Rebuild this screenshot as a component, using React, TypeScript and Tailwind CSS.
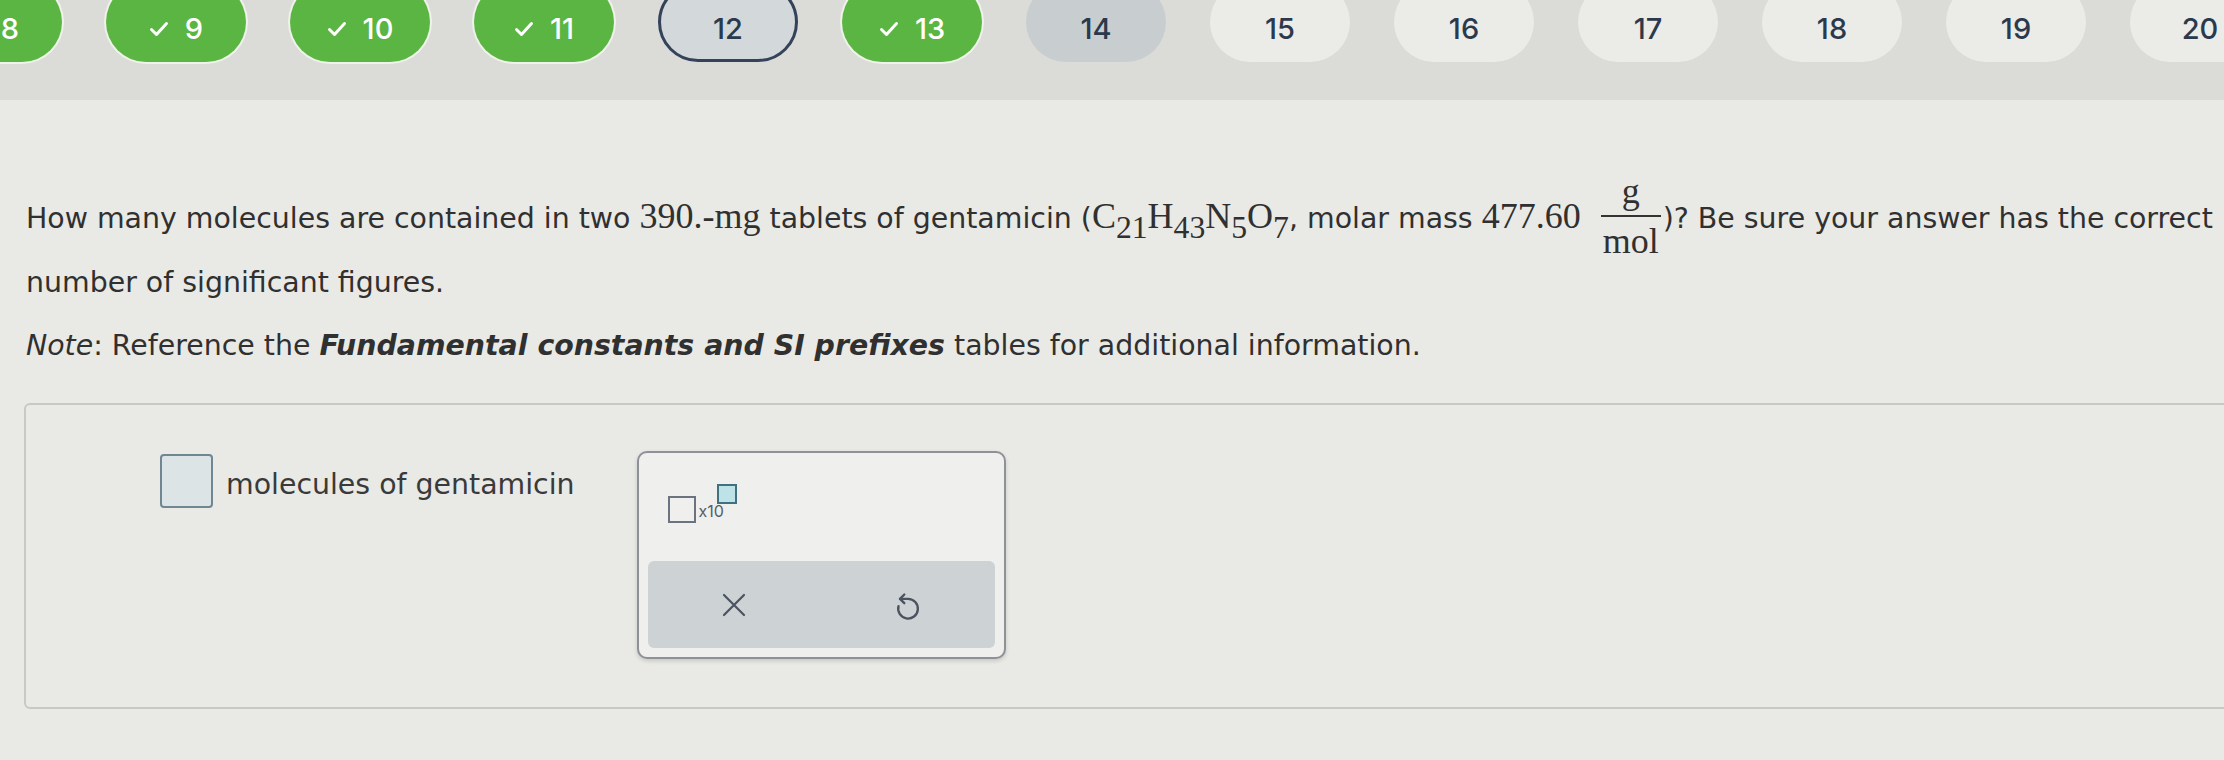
import React from "react";

type Status = "done" | "current" | "visited" | "todo";

const questions: { n: number; status: Status }[] = [
  { n: 8, status: "done" },
  { n: 9, status: "done" },
  { n: 10, status: "done" },
  { n: 11, status: "done" },
  { n: 12, status: "current" },
  { n: 13, status: "done" },
  { n: 14, status: "visited" },
  { n: 15, status: "todo" },
  { n: 16, status: "todo" },
  { n: 17, status: "todo" },
  { n: 18, status: "todo" },
  { n: 19, status: "todo" },
  { n: 20, status: "todo" },
];

const pillStyle: Record<Status, string> = {
  done: "bg-[#5bb542] text-white ring-2 ring-[#eef2ea]",
  current: "bg-[#d3d8da] text-[#2b394c] border-[3px] border-[#34435a]",
  visited: "bg-[#c8ced0] text-[#2b394c]",
  todo: "bg-[#ebebe8] text-[#2b394c]",
};

const serif = "font-['Liberation_Serif',serif] text-[36px]";
const sub = "relative -bottom-[0.32em] text-[88%] leading-none";

function CheckMark() {
  return (
    <svg width="20" height="16" viewBox="0 0 20 16" fill="none" stroke="currentColor" strokeWidth="3" strokeLinecap="round" strokeLinejoin="round">
      <path d="M2.5 8.5 7.5 13.5 17.5 2.5" />
    </svg>
  );
}

function QuestionBar() {
  return (
    <div className="h-[100px] overflow-hidden bg-[#dbdbd8]">
      <div className="-mt-[18px] -ml-[78px] flex gap-[44px]">
        {questions.map((q) => (
          <div
            key={q.n}
            className={`flex h-[80px] w-[140px] shrink-0 items-center justify-center gap-[16px] rounded-full pt-[14px] font-['Inter',sans-serif] text-[29px] font-medium ${pillStyle[q.status]}`}
          >
            {q.status === "done" && <CheckMark />}
            <span>{q.n}</span>
          </div>
        ))}
      </div>
    </div>
  );
}

function Fraction() {
  return (
    <span className="relative -top-[4px] -my-[12px] mr-[2px] ml-[20px] inline-flex flex-col items-center align-middle font-['Liberation_Serif',serif] text-[36px] leading-[36px]">
      <span>g</span>
      <span className="my-[6px] h-[2px] w-[60px] bg-[#333]" />
      <span>mol</span>
    </span>
  );
}

function XIcon() {
  return (
    <svg width="24" height="24" viewBox="0 0 24 24" fill="none" stroke="#4b5360" strokeWidth="2.2" strokeLinecap="round">
      <path d="M2 2 22 22M22 2 2 22" />
    </svg>
  );
}

function UndoIcon() {
  return (
    <svg width="26" height="32" viewBox="0 0 20 26" fill="none" stroke="#4b5360" strokeWidth="1.9" strokeLinecap="round" strokeLinejoin="round">
      <path d="M7 4.5 3.5 8 7 11.5" />
      <path d="M3.5 8H10A8 8 0 1 1 2.3 13.9" />
    </svg>
  );
}

export default function App() {
  return (
    <div className="min-h-[760px] w-full overflow-hidden bg-[#e9e9e6] font-['DejaVu_Sans',Verdana,sans-serif] text-[#303030]">
      <QuestionBar />

      <div className="px-[26px] pt-[85px] text-[28.4px] leading-[63px]">
        <p className="whitespace-nowrap">
          How many molecules are contained in two <span className={serif}>390.-mg</span> tablets of gentamicin (
          <span className={serif}>
            C<sub className={sub}>21</sub>H<sub className={sub}>43</sub>N<sub className={sub}>5</sub>O<sub className={sub}>7</sub>
          </span>
          , molar mass <span className={serif}>477.60</span>
          <Fraction />
          )? Be sure your answer has the correct
          <br />
          number of significant figures.
        </p>
        <p>
          <i>Note</i>: Reference the{" "}
          <b>
            <i>Fundamental constants and SI prefixes</i>
          </b>{" "}
          tables for additional information.
        </p>
      </div>

      <div className="-mr-[200px] mt-[26px] ml-[24px] flex h-[306px] items-start rounded-[6px] border-2 border-[#c8c8c5] pl-[134px] pt-[49px]">
        <div className="h-[54px] w-[53px] rounded-[4px] border-2 border-[#6e8793] bg-[#dde4e6]" />
        <span className="mt-[11px] ml-[13px] text-[28.4px] leading-[40px] text-[#3a3a3a]">molecules of gentamicin</span>

        <div className="-mt-[3px] ml-[62px] flex h-[208px] w-[369px] flex-col rounded-[10px] border-2 border-[#8e9296] bg-[#efefed] px-[9px] pt-[31px] shadow-[0_2px_4px_rgba(0,0,0,0.15)]">
          <div className="ml-[20px] flex h-[39px] items-start">
            <div className="mt-[12px] h-[27px] w-[28px] border-2 border-[#6b7380]" />
            <span className="mt-[20px] ml-[3px] font-['Inter',sans-serif] text-[16px] leading-[15px] text-[#555e6a]">x10</span>
            <div className="-ml-[7px] h-[20px] w-[20px] border-2 border-[#41707f] bg-[#bde3e8]" />
          </div>
          <div className="mt-[38px] grid h-[87px] grid-cols-2 place-items-center rounded-[6px] bg-[#cdd2d4]">
            <XIcon />
            <UndoIcon />
          </div>
        </div>
      </div>
    </div>
  );
}
